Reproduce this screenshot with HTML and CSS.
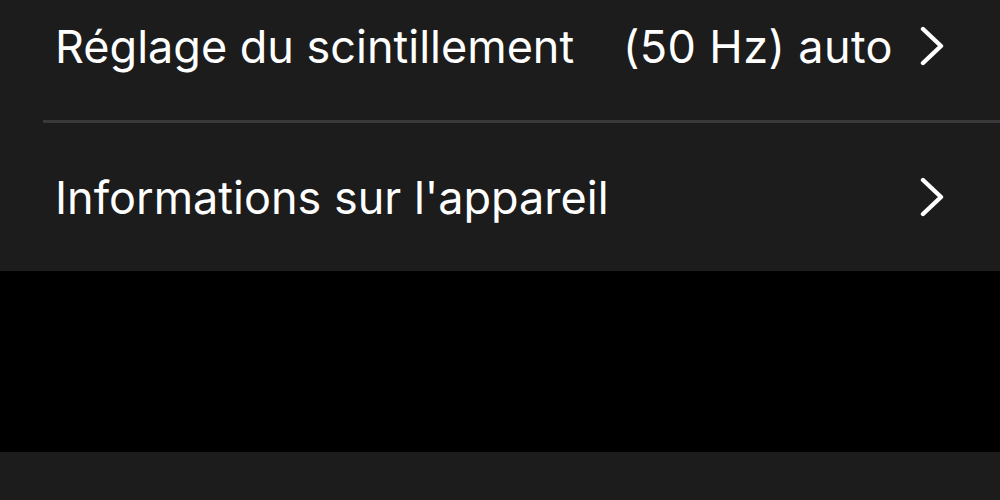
FILE: index.html
```html
<!DOCTYPE html>
<html lang="fr">
<head>
<meta charset="utf-8">
<link rel="stylesheet" href="styles.css">
</head>
<body>
<div class="group">
  <div class="row">
    <span class="label">Réglage du scintillement</span>
    <span class="value">(50 Hz) auto</span>
    <svg class="chev" viewBox="0 0 24 40" width="24" height="40"><path d="M3 3 L21 20 L3 37" fill="none" stroke="#fff" stroke-width="4.4" stroke-linecap="round" stroke-linejoin="round"/></svg>
  </div>
  <div class="sep"></div>
  <div class="row">
    <span class="label">Informations sur l'appareil</span>
    <svg class="chev" viewBox="0 0 24 40" width="24" height="40"><path d="M3 3 L21 20 L3 37" fill="none" stroke="#fff" stroke-width="4.4" stroke-linecap="round" stroke-linejoin="round"/></svg>
  </div>
</div>
<div class="gap"></div>
<div class="group bottom"></div>
</body>
</html>
```
FILE: styles.css
```css
html, body {
  margin: 0;
  padding: 0;
  background: #000;
  height: 500px;
  overflow: hidden;
}
body {
  font-family: Inter, "Noto Sans", sans-serif;
  color: #fff;
}
.group {
  background: #1c1c1c;
  margin-top: -28px;
}
.row {
  height: 148px;
  display: flex;
  align-items: center;
  padding: 0 56px 0 55px;
}
.label {
  font-size: 45px;
  flex: 1;
  white-space: nowrap;
}
.value {
  font-size: 45px;
  letter-spacing: 0.4px;
  margin-right: 27px;
  white-space: nowrap;
}
.chev {
  display: block;
  flex: none;
}
.sep {
  height: 3px;
  margin-left: 43px;
  background: #38383a;
}
.gap {
  height: 181px;
}
.bottom {
  margin-top: 0;
  height: 48px;
}
```
